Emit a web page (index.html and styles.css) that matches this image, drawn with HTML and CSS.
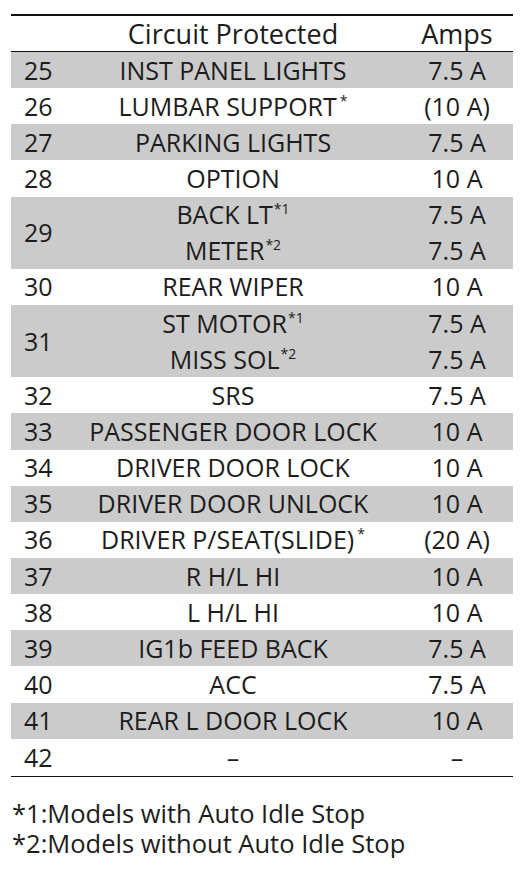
FILE: index.html
```html
<!DOCTYPE html>
<html lang="en">
<head>
<meta charset="utf-8">
<title>Fuse table</title>
<link rel="stylesheet" href="styles.css">
</head>
<body>
<table class="fuses">
  <colgroup>
    <col class="c-num">
    <col class="c-circ">
    <col class="c-amp">
  </colgroup>
  <thead>
    <tr><th></th><th class="circ">Circuit Protected</th><th class="amp">Amps</th></tr>
  </thead>
  <tbody>
    <tr class="shade"><td class="num">25</td><td class="circ">INST PANEL LIGHTS</td><td class="amp">7.5 A</td></tr>
    <tr><td class="num">26</td><td class="circ">LUMBAR SUPPORT<sup class="ast">*</sup></td><td class="amp">(10 A)</td></tr>
    <tr class="shade"><td class="num">27</td><td class="circ">PARKING LIGHTS</td><td class="amp">7.5 A</td></tr>
    <tr><td class="num">28</td><td class="circ">OPTION</td><td class="amp">10 A</td></tr>
    <tr class="shade"><td class="num" rowspan="2">29</td><td class="circ">BACK LT<sup>*1</sup></td><td class="amp">7.5 A</td></tr>
    <tr class="shade"><td class="circ">METER<sup>*2</sup></td><td class="amp">7.5 A</td></tr>
    <tr><td class="num">30</td><td class="circ">REAR WIPER</td><td class="amp">10 A</td></tr>
    <tr class="shade"><td class="num" rowspan="2">31</td><td class="circ">ST MOTOR<sup>*1</sup></td><td class="amp">7.5 A</td></tr>
    <tr class="shade"><td class="circ">MISS SOL<sup>*2</sup></td><td class="amp">7.5 A</td></tr>
    <tr><td class="num">32</td><td class="circ">SRS</td><td class="amp">7.5 A</td></tr>
    <tr class="shade"><td class="num">33</td><td class="circ">PASSENGER DOOR LOCK</td><td class="amp">10 A</td></tr>
    <tr><td class="num">34</td><td class="circ">DRIVER DOOR LOCK</td><td class="amp">10 A</td></tr>
    <tr class="shade"><td class="num">35</td><td class="circ">DRIVER DOOR UNLOCK</td><td class="amp">10 A</td></tr>
    <tr><td class="num">36</td><td class="circ">DRIVER P/SEAT(SLIDE)<sup class="ast">*</sup></td><td class="amp">(20 A)</td></tr>
    <tr class="shade"><td class="num">37</td><td class="circ">R H/L HI</td><td class="amp">10 A</td></tr>
    <tr><td class="num">38</td><td class="circ">L H/L HI</td><td class="amp">10 A</td></tr>
    <tr class="shade"><td class="num">39</td><td class="circ">IG1b FEED BACK</td><td class="amp">7.5 A</td></tr>
    <tr><td class="num">40</td><td class="circ">ACC</td><td class="amp">7.5 A</td></tr>
    <tr class="shade"><td class="num">41</td><td class="circ">REAR L DOOR LOCK</td><td class="amp">10 A</td></tr>
    <tr class="last"><td class="num">42</td><td class="circ">–</td><td class="amp">–</td></tr>
  </tbody>
</table>
<div class="notes">
  <p>*1:Models with Auto Idle Stop</p>
  <p>*2:Models without Auto Idle Stop</p>
</div>
</body>
</html>
```
FILE: styles.css
```css
html, body {
  margin: 0;
  padding: 0;
  background: #ffffff;
}
body {
  font-family: "Open Sans", "Noto Sans", sans-serif;
  color: #1c1c1c;
  font-size: 25px;
}
.fuses {
  border-collapse: collapse;
  margin: 14px 0 0 11px;
  width: 502px;
  table-layout: fixed;
  border-top: 2px solid #111;
  border-bottom: 1px solid #111;
}
.c-num { width: 62px; }
.c-circ { width: 320px; }
.c-amp { width: 120px; }
.fuses th {
  font-weight: 400;
  font-size: 27px;
  height: 35px;
  padding: 0;
  border-bottom: 1px solid #111;
  vertical-align: middle;
  line-height: 1;
}
.fuses td {
  height: 36.15px;
  padding: 0;
  vertical-align: middle;
  line-height: 1;
  white-space: nowrap;
}
.fuses tr.last td { height: 37px; }
.shade td { background: #cbcbcb; }
.num { text-align: left; padding-left: 13px !important; }
.circ { text-align: center; }
.amp { text-align: center; padding-left: 8px !important; }
sup {
  font-size: 14px;
  vertical-align: 0;
  position: relative;
  top: -10px;
  margin-left: 1px;
}
sup.ast { margin-left: 3px; }
.notes {
  margin: 21px 0 0 12px;
  font-size: 25.5px;
  line-height: 30px;
}
.notes p { margin: 0; }
```
